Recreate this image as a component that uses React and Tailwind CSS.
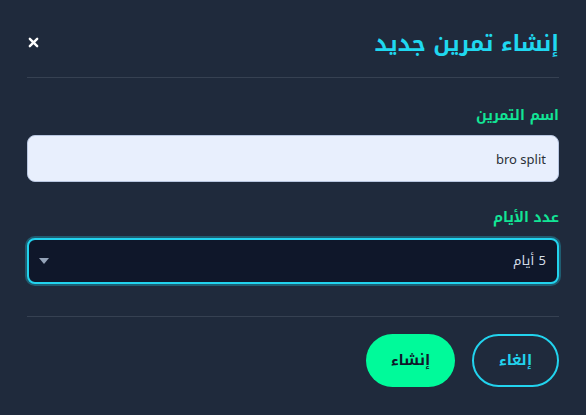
import React, { useState } from 'react'

export default function App() {
  const [name, setName] = useState('bro split')
  const [days, setDays] = useState('5')

  return (
    <div
      dir="rtl"
      className="w-[586px] h-[415px] bg-[#1f2a3c] px-[27px] flex flex-col"
      style={{ fontFamily: '"Noto Kufi Arabic", "Noto Sans", sans-serif' }}
    >
      {/* header */}
      <div className="h-[78px] pt-[12px] flex items-center justify-between border-b border-[#364152]">
        <h1 className="text-[22px] font-bold text-[#1fd8f0]">إنشاء تمرين جديد</h1>
        <button className="w-[14px] h-[14px] ml-[-1px] mb-[4px] flex items-center justify-center text-white">
          <svg className="w-[11px] h-[11px]" viewBox="0 0 12 12" fill="none" stroke="currentColor" strokeWidth={2.6} strokeLinecap="round">
            <path d="M2 2l8 8M10 2l-8 8" />
          </svg>
        </button>
      </div>

      {/* body */}
      <div className="pt-[27px] pb-[32px] border-b border-[#364152]">
        <label className="block text-[14px] font-bold text-[#12e596] leading-[22px] mb-[8px]">اسم التمرين</label>
        <input
          value={name}
          onChange={e => setName(e.target.value)}
          className="block w-full h-[47px] rounded-[8px] bg-[#e8effd] border border-[#b8c6e0] pr-[12px] pl-[12px] text-[13px] text-[#2a2f38] outline-none"
          style={{ fontFamily: '"Noto Sans", sans-serif' }}
        />

        <label className="block text-[14px] font-bold text-[#12e596] leading-[22px] mt-[25px] mb-[9px]">عدد الأيام</label>
        <div className="relative">
          <select
            value={days}
            onChange={e => setDays(e.target.value)}
            className="block appearance-none w-full h-[46px] rounded-[8px] bg-[#0f172a] border-2 border-[#22d3ee] ring-2 ring-[#22d3ee]/30 px-[11px] text-[13px] text-[#d5dde8] outline-none"
          >
            <option value="3">3 أيام</option>
            <option value="4">4 أيام</option>
            <option value="5">5 أيام</option>
            <option value="6">6 أيام</option>
          </select>
          <svg className="absolute left-[12px] top-[20px] w-[10px] h-[6px] pointer-events-none" viewBox="0 0 10 6" fill="#94a3b8">
            <path d="M0 0h10L5 6z" />
          </svg>
        </div>
      </div>

      {/* footer */}
      <div className="flex gap-[17px] pt-[17px]">
        <button className="w-[87px] h-[53px] rounded-full border-2 border-[#22d3ee] text-[#22d3ee] text-[15px] font-bold">
          إلغاء
        </button>
        <button className="w-[89px] h-[53px] rounded-full bg-[#00fa9a] text-[#0f172a] text-[15px] font-bold">
          إنشاء
        </button>
      </div>
    </div>
  )
}
